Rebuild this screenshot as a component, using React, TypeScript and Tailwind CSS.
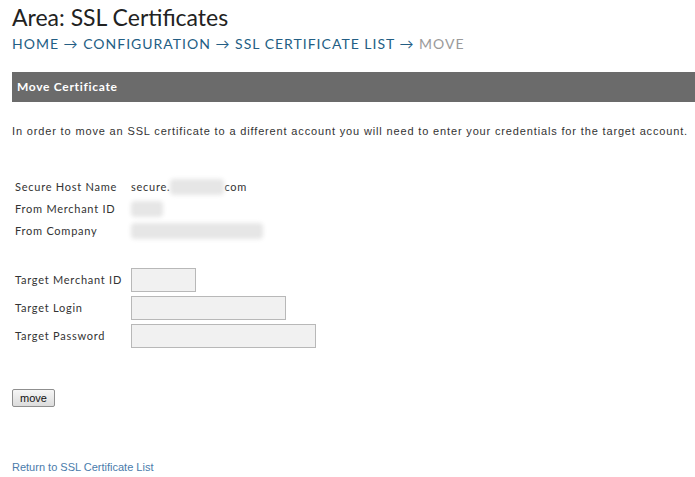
import React from "react";

const lato = { fontFamily: "Lato, 'Noto Sans', sans-serif" };
const arial = { fontFamily: "'Liberation Sans', Arial, sans-serif" };

const Blur: React.FC<{ w: string }> = ({ w }) => (
  <span className={`inline-block h-[16px] ${w} rounded-sm bg-[#e6e6e6] blur-[2px] align-middle`} />
);

const InfoRow: React.FC<{ label: string; children: React.ReactNode }> = ({ label, children }) => (
  <div className="flex h-[22px] items-center">
    <div className="w-[116px] text-[11px] tracking-[0.75px] text-[#333]">{label}</div>
    <div className="flex items-center text-[11px] tracking-[0.75px] text-[#333]">{children}</div>
  </div>
);

const FieldRow: React.FC<{ label: string; w: string; type?: string }> = ({ label, w, type }) => (
  <div className="flex h-[28px] items-center">
    <div className="w-[116px] text-[11px] tracking-[0.75px] text-[#333]">{label}</div>
    <input
      type={type ?? "text"}
      className={`h-[24px] ${w} border border-[#b8b8b8] bg-[#f1f1f1] outline-none`}
    />
  </div>
);

const App: React.FC = () => {
  return (
    <div className="min-h-[477px] w-[695px] overflow-hidden bg-white pl-[12px]">
      <h1 className="pt-[4px] text-[23px] leading-[26px] text-[#222]" style={lato}>
        Area: SSL Certificates
      </h1>
      <div className="mt-[5px] text-[14px] leading-[18px] tracking-[1px] text-[#235e84]" style={lato}>
        <a href="#">HOME</a> → <a href="#">CONFIGURATION</a> → <a href="#">SSL CERTIFICATE LIST</a> →{" "}
        <span className="text-[#9a9a9a]">MOVE</span>
      </div>

      <div className="mt-[19px] flex h-[30px] items-center bg-[#6b6b6b] pl-[5px]">
        <span className="text-[12px] font-bold tracking-[0.7px] text-white" style={lato}>
          Move Certificate
        </span>
      </div>

      <p className="mt-[22px] text-[11px] leading-[14px] tracking-[0.85px] text-[#333]" style={arial}>
        In order to move an SSL certificate to a different account you will need to enter your credentials for the target account.
      </p>

      <div className="mt-[38px] pl-[3px]" style={lato}>
        <InfoRow label="Secure Host Name">
          secure.<Blur w="w-[54px]" />com
        </InfoRow>
        <InfoRow label="From Merchant ID">
          <Blur w="w-[32px]" />
        </InfoRow>
        <InfoRow label="From Company">
          <Blur w="w-[132px]" />
        </InfoRow>

        <div className="mt-[24px]">
          <FieldRow label="Target Merchant ID" w="w-[65px]" />
          <FieldRow label="Target Login" w="w-[155px]" />
          <FieldRow label="Target Password" w="w-[185px]" type="password" />
        </div>
      </div>

      <div className="mt-[39px] flex">
        <button
          className="h-[18px] w-[43px] rounded-[2px] border border-[#8f8f8f] bg-gradient-to-b from-[#f6f6f6] to-[#dcdcdc] text-[11px] leading-[14px] text-[#111]"
          style={arial}
        >
          move
        </button>
      </div>

      <div className="mt-[53px] text-[11px] leading-[14px]" style={arial}>
        <a href="#" className="text-[#4a7bab]">
          Return to SSL Certificate List
        </a>
      </div>
    </div>
  );
};

export default App;
